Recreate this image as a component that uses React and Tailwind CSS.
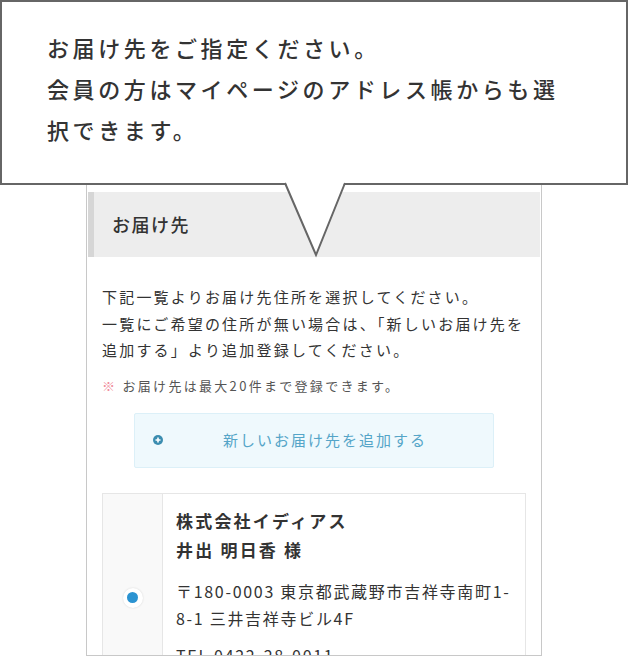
import React from 'react';

const jp = { fontFamily: '"Noto Sans CJK JP", "Noto Sans", sans-serif' };

function Pointer() {
  return (
    <svg className="absolute left-[280px] top-[181px] z-20" width="70" height="80" viewBox="0 0 70 80">
      <polygon points="5,0 36,74 65,0" fill="#ffffff" />
      <polyline points="5,2 36,74 65,2" fill="none" stroke="#666666" strokeWidth="2" strokeLinejoin="miter" />
    </svg>
  );
}

function PlusIcon() {
  return (
    <svg width="10" height="10" viewBox="0 0 10 10" className="shrink-0">
      <circle cx="5" cy="5" r="5" fill="#3b8db0" />
      <path d="M5 2.5v5M2.5 5h5" stroke="#ffffff" strokeWidth="1.6" />
    </svg>
  );
}

export default function App() {
  return (
    <div className="relative w-[630px] h-[658px] bg-white overflow-hidden text-[#333]" style={jp}>
      {/* callout */}
      <div className="relative z-10 w-[628px] h-[185px] border-2 border-[#666] bg-white pl-[45px] pt-[25px]">
        <p className="text-[22px] font-medium leading-[41px] tracking-[3.6px] whitespace-nowrap text-[#333]">
          お届け先をご指定ください。
          <br />
          会員の方はマイページのアドレス帳からも選
          <br />
          択できます。
        </p>
      </div>
      <Pointer />

      {/* page behind */}
      <div className="ml-[86px] w-[456px] h-[471px] border-x border-b border-[#c8c8c8] overflow-hidden pt-[7px] px-[1px]">
        <div className="h-[65px] bg-[#ededed] border-l-[6px] border-[#d6d6d6] flex items-center pl-[18px]">
          <h2 className="text-[18px] font-medium tracking-[1.5px] text-[#333]">お届け先</h2>
        </div>

        <div className="px-[14px] pt-[27px]">
          <p className="text-[15px] leading-[26.5px] tracking-[2.2px] text-[#333] whitespace-nowrap">
            下記一覧よりお届け先住所を選択してください。
            <br />
            一覧にご希望の住所が無い場合は、「新しいお届け先を
            <br />
            追加する」より追加登録してください。
          </p>
          <p className="mt-[12px] text-[13px] leading-[20px] tracking-[2.3px] text-[#555] whitespace-nowrap">
            <span className="text-[#f08c9a]">※</span> お届け先は最大20件まで登録できます。
          </p>

          <div className="mx-auto mt-[17px] w-[360px] h-[55px] bg-[#eff9fd] border border-[#dcf0f8] rounded-[2px] flex items-center pl-[18px]">
            <PlusIcon />
            <span className="flex-1 text-center text-[15px] tracking-[2px] text-[#55a5c8] pr-[6px]">
              新しいお届け先を追加する
            </span>
          </div>

          <div className="mt-[25px] flex border border-[#e6e6e6]">
            <div className="w-[60px] shrink-0 bg-[#f9f9f9] border-r border-[#e6e6e6] flex items-center justify-center">
              <span className="w-[20px] h-[20px] rounded-full bg-white shadow-[0_0_2px_rgba(0,0,0,0.15)] flex items-center justify-center">
                <span className="w-[11px] h-[11px] rounded-full bg-[#2b93d1]" />
              </span>
            </div>
            <div className="flex-1 pl-[13px] pt-[12px] pb-[33px]">
              <p className="text-[17px] font-bold leading-[29px] tracking-[2.2px] text-[#333]">
                株式会社イディアス
                <br />
                井出 明日香 様
              </p>
              <p className="mt-[14.5px] text-[16px] leading-[27px] tracking-[1.7px] text-[#333] whitespace-nowrap">
                〒180-0003 東京都武蔵野市吉祥寺南町1-
                <br />
                8-1 三井吉祥寺ビル4F
              </p>
              <p className="mt-[10px] text-[16px] leading-[27px] tracking-[1.7px] text-[#333]">
                TEL 0422-28-0011
              </p>
            </div>
          </div>
        </div>
      </div>
    </div>
  );
}
